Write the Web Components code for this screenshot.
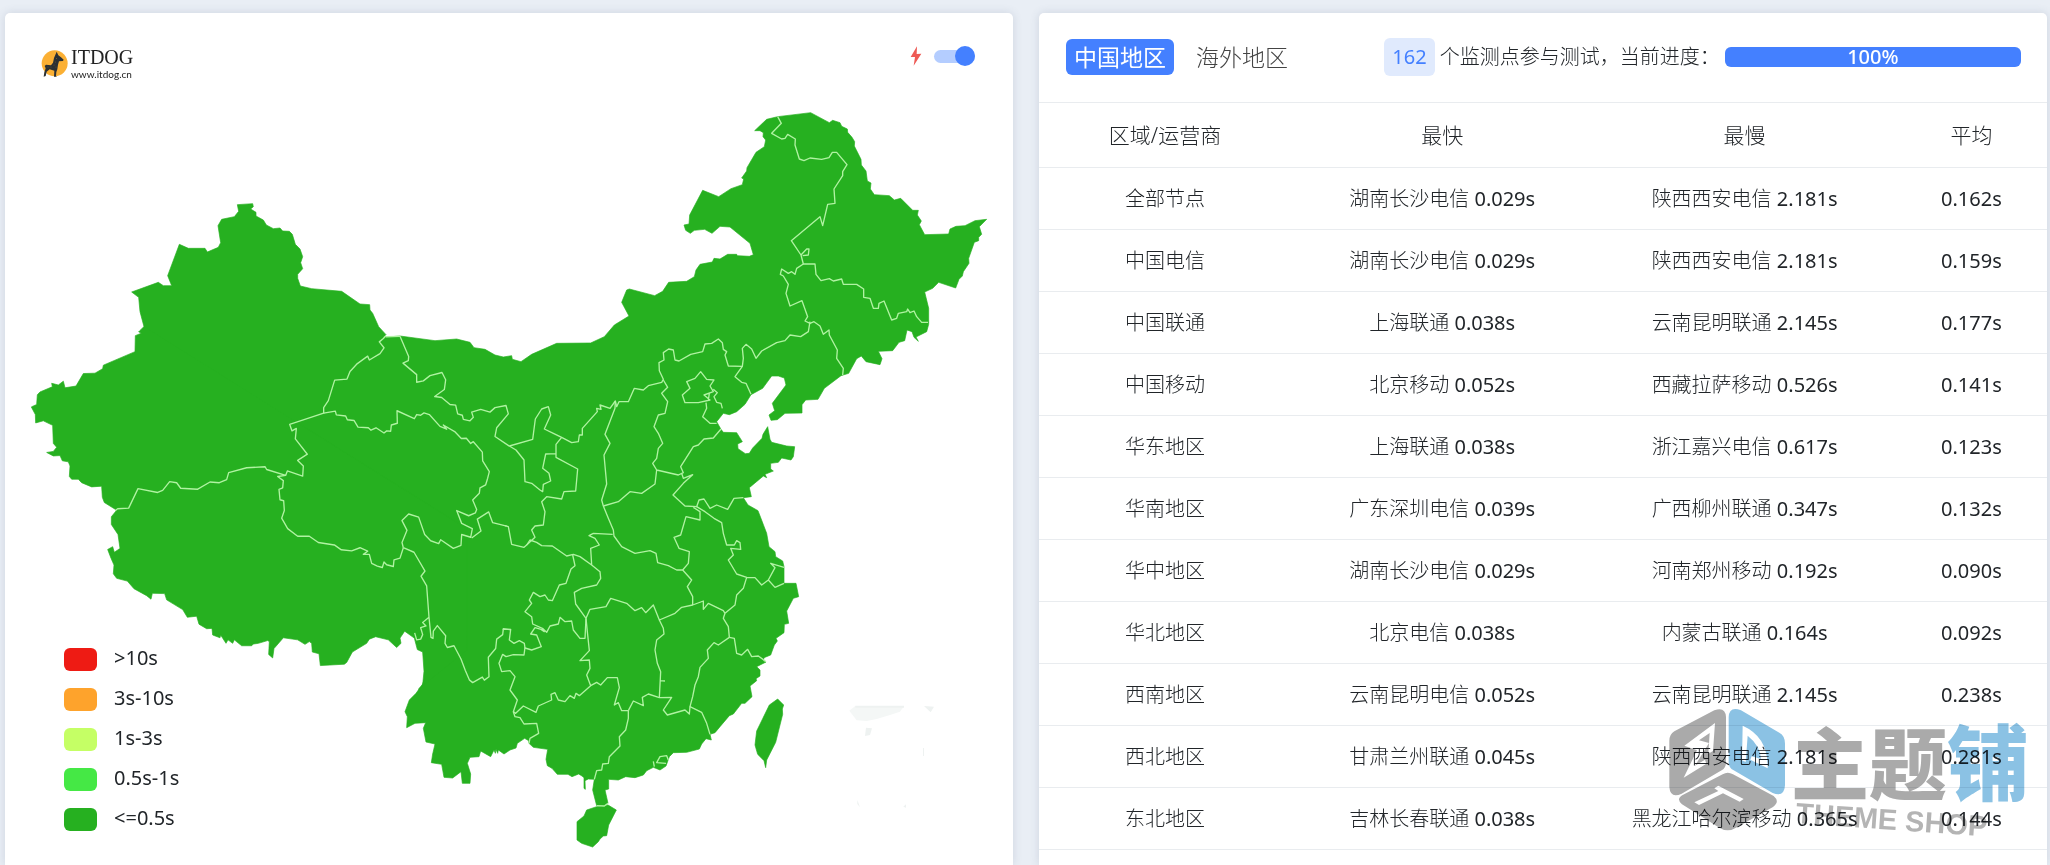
<!DOCTYPE html>
<html lang="zh-CN">
<head>
<meta charset="utf-8">
<title>ITDOG</title>
<style>
  body {
    margin: 0;
    font: 20px/30px "Noto Sans", "Noto Sans CJK SC", sans-serif;
    color: #212529;
    background: #e9eef5;
  }
</style>
</head>
<body>
<speed-page>
  <map-card slot="map"></map-card>
  <result-card slot="result" count="162" progress="100"></result-card>
</speed-page>

<script>
function attach(el, html) {
  const template = document.createElement('template');
  template.innerHTML = html;
  const shadow = el.attachShadow({ mode: 'open' });
  shadow.appendChild(template.content.cloneNode(true));
  return shadow;
}

class SpeedPage extends HTMLElement {
  constructor() {
    super();
    attach(this, `
      <style>
        :host {
          display: grid;
          grid-template-columns: 1fr 1fr;
          gap: 26px;
          min-height: 100vh;
          box-sizing: border-box;
          padding: 13px 3px 0 5px;
        }
        ::slotted(*) {
          background: #fff;
          border-radius: 5px 5px 0 0;
          box-shadow: 0 0 10px rgba(60, 80, 110, .16);
        }
      </style>
      <slot name="map"></slot>
      <slot name="result"></slot>`);
  }
}

class SiteLogo extends HTMLElement {
  constructor() {
    super();
    attach(this, `
      <style>
        :host { display: flex; align-items: center; gap: 3px; height: 34px; }
        svg { width: 27px; height: 27px; }
        .words { display: flex; flex-direction: column; }
        .name { font: 20px/22px "Liberation Serif", serif; color: #222; }
        .url { font: 10px/12px Lato, sans-serif; color: #222; }
      </style>
      <svg viewBox="0 0 81 81" aria-hidden="true">
        <circle cx="41" cy="40" r="39" fill="#fbb034"/>
        <path fill="#2b3033" d="M47 5 L52 16 L60 22 L68 29 L66 33 L54 34 L51 44 L49 58 L46 66 L45 78 L48 80 L39 80 L40 62 L26 58 L17 65 L14 78 L8 80 L10 67 L14 55 L11 48 L15 44 L30 46 L36 38 L39 24Z"/>
        <g fill="#fbb034"><circle cx="46" cy="26" r="1"/><circle cx="44" cy="36" r="1"/><circle cx="39" cy="45" r="1"/><circle cx="45" cy="51" r="1"/><circle cx="30" cy="51" r="1"/><circle cx="21" cy="51" r="1"/></g>
      </svg>
      <span class="words"><span class="name">ITDOG</span><span class="url">www.itdog.cn</span></span>`);
  }
}

class ToggleSwitch extends HTMLElement {
  constructor() {
    super();
    attach(this, `
      <style>
        :host { display: block; }
        label { display: flex; align-items: center; gap: 12px; height: 20px; cursor: pointer; }
        svg { width: 12px; height: 20px; }
        input {
          appearance: none;
          display: flex;
          align-items: center;
          width: 41px;
          height: 13px;
          margin: 0;
          border-radius: 7px;
          background: #d5d8de;
          cursor: pointer;
        }
        input::before {
          content: "";
          width: 20px;
          height: 20px;
          flex: none;
          border-radius: 50%;
          background: #999;
        }
        input:checked { background: #b4cdff; justify-content: flex-end; }
        input:checked::before { background: #4480ff; }
      </style>
      <label>
        <svg viewBox="0 0 36 60" aria-hidden="true"><path fill="#ee5a55" d="M21 1 L2 33 L15 33 L11 59 L34 23 L20 24Z"/></svg>
        <input type="checkbox" checked aria-label="快速测试">
      </label>`);
  }
}

class MapLegend extends HTMLElement {
  constructor() {
    super();
    const levels = [
      ['#ee1b14', '>10s'],
      ['#fea32c', '3s-10s'],
      ['#c5ff65', '1s-3s'],
      ['#45e845', '0.5s-1s'],
      ['#26b020', '<=0.5s'],
    ];
    const shadow = attach(this, `
      <style>
        :host { display: block; }
        ul { display: grid; gap: 10px; margin: 0; padding: 0; list-style: none; }
        li { display: flex; align-items: center; gap: 17px; }
        i { width: 33px; height: 23px; margin-top: 2px; border-radius: 6px; }
      </style>
      <ul></ul>`);
    const list = shadow.querySelector('ul');
    for (const [color, label] of levels) {
      const item = document.createElement('li');
      const swatch = document.createElement('i');
      const text = document.createElement('span');
      swatch.style.background = color;
      text.textContent = label;
      item.append(swatch, text);
      list.append(item);
    }
  }
}

class ChinaMap extends HTMLElement {
  constructor() {
    super();
    attach(this, `
      <style>
        :host { display: block; }
        svg { display: block; width: 100%; height: auto; }
        .land { fill: #26b020; stroke: #26b020; stroke-width: 2; }
        .line { fill: none; stroke: #b0f3a2; stroke-width: 4; stroke-linejoin: round; }
      </style>
      <svg viewBox="15 270 3024 2325" role="img" aria-label="中国地图">
        <!-- mainland, north / east / south -->
        <path class="land" d="M712 614 758 611 760 620 752 627 768 637 768 648 790 660 799 675 820 686 840 684 848 693 868 694 877 703 886 733 900 747 908 770 902 788 908 806 893 823 893 835 901 858 935 866 1025 874 1080 912 1109 914 1110 930 1118 940 1136 980 1158 1004 1150 1012 1200 1008 1305 1022 1370 1017 1410 1027 1422 1043 1455 1048 1485 1065 1510 1071 1535 1067 1537 1078 1563 1085 1595 1063 1670 1030 1772 1029 1813 1010 1843 975 1887 948 1865 907 1880 870 1888 867 1964 887 1988 874 2006 847 2060 844 2083 830 2088 810 2100 793 2137 786 2142 775 2160 777 2183 763 2210 763 2212 767 2248 769 2260 764 2250 730 2190 681 2160 679 2136 700 2114 688 2083 691 2071 700 2057 691 2052 675 2067 672 2069 645 2108 571 2156 590 2193 566 2227 554 2231 537 2225 534 2240 513 2241 503 2268 457 2293 440 2297 420 2289 410 2290 398 2280 392 2264 392 2300 358 2333 350 2432 338 2488 368 2498 361 2520 368 2525 379 2542 387 2543 397 2556 412 2564 425 2563 438 2583 478 2584 495 2598 513 2602 543 2613 549 2611 567 2623 584 2668 587 2683 600 2702 595 2738 631 2755 631 2752 645 2764 663 2758 674 2774 704 2846 702 2850 687 2868 679 2895 677 2925 662 2960 658 2938 680 2945 703 2936 712 2936 722 2923 727 2906 775 2907 790 2890 815 2887 828 2877 838 2867 864 2816 847 2798 865 2774 876 2786 925 2786 973 2780 995 2748 1011 2755 1024 2742 1012 2736 995 2721 990 2714 1022 2697 1027 2678 1052 2635 1054 2646 1076 2640 1094 2598 1085 2584 1068 2570 1076 2546 1120 2523 1127 2473 1165 2454 1198 2417 1200 2406 1214 2406 1239 2355 1240 2332 1259 2313 1261 2307 1245 2324 1232 2317 1210 2358 1155 2353 1134 2335 1128 2315 1128 2288 1165 2253 1184 2235 1213 2210 1235 2188 1244 2170 1240 2150 1265 2163 1288 2170 1297 2210 1298 2227 1325 2213 1332 2214 1346 2236 1361 2248 1360 2258 1344 2286 1315 2289 1303 2303 1280 2310 1318 2315 1327 2360 1338 2384 1340 2380 1370 2373 1380 2345 1374 2335 1387 2312 1390 2312 1407 2320 1413 2295 1423 2300 1433 2290 1428 2248 1463 2254 1490 2230 1493 2244 1515 2274 1532 2300 1600 2307 1640 2325 1655 2327 1670 2348 1683 2352 1700 2352 1750 2388 1750 2396 1790 2380 1795 2360 1833 2366 1870 2353 1873 2352 1898 2328 1915 2332 1923 2323 1935 2312 1965 2292 1973 2290 1983 2298 1986 2270 2000 2280 2010 2280 2028 2268 2036 2270 2042 2250 2058 2256 2090 2235 2110 2225 2110 2200 2142 2188 2147 2160 2180 2145 2198 2130 2203 2134 2220 2118 2216 2105 2232 2098 2247 2060 2257 2020 2258 2008 2270 1998 2298 1980 2310 1960 2302 1940 2312 1930 2325 1905 2333 1877 2330 1855 2340 1826 2338 1826 2367 1815 2370 1824 2410 1813 2418 1790 2417 1778 2370 1783 2338 1765 2337 1755 2342 1756 2368 1752 2365 1752 2333 1746 2328 1736 2322 1716 2330 1704 2323 1672 2323 1656 2305 1642 2297 1638 2278 1643 2248 1600 2242 1587 2230 1586 2222 1574 2215 1552 2230 1548 2244 1530 2250 1512 2262 1495 2250 1493 2260 1488 2248 1486 2260 1482 2250 1472 2270 1442 2253 1437 2270 1410 2272 1402 2290 1412 2322 1410 2350 1387 2350 1383 2315 1358 2334 1332 2332 1325 2293 1294 2288 1298 2262 1305 2232 1278 2226 1270 2185 1277 2168 1245 2170 1220 2183 1222 2150 1215 2135 1228 2100 1248 2080 1268 2052 1340 1840 1150 1750 1000 1500 432 980 420 935 416 892 395 876 475 847 490 857 515 857 503 827 538 733 565 745 615 745 622 756 655 742 662 728 654 677 665 658 703 650 716 634Z"/>
        <!-- Taiwan, Hainan -->
        <path class="land" d="M2333 2097 2351 2115 2347 2127 2348 2143 2327 2227 2300 2280 2297 2303 2292 2282 2273 2263 2265 2235 2270 2193 2308 2115Z"/>
        <path class="land" d="M1824 2415 1849 2430 1826 2475 1820 2507 1810 2508 1800 2517 1795 2525 1778 2541 1745 2530 1731 2520 1731 2465 1752 2448 1760 2430 1790 2420Z"/>
        <!-- west -->
        <g transform="translate(0 960) scale(1 1.043)">
          <path class="land" d="M432 19 420 30 416 34 424 38 406 45 405 91 310 130 308 140 285 153 250 154 228 190 195 195 190 176 175 187 155 182 157 192 120 207 112 215 110 243 94 250 106 272 107 296 130 290 158 303 160 355 170 366 160 378 140 381 160 391 180 390 187 405 205 408 210 420 208 450 215 458 235 458 245 468 275 480 305 478 307 510 313 525 350 547 334 566 334 588 354 617 360 657 343 668 338 652 323 660 333 685 342 705 340 730 350 743 382 751 402 773 440 793 453 803 457 786 494 787 500 805 548 833 562 855 590 852 597 875 620 888 636 887 638 906 660 914 662 906 678 930 684 920 698 930 703 920 725 937 755 937 760 932 775 930 803 922 808 925 806 962 818 972 822 945 850 914 893 920 915 933 928 925 935 930 937 955 957 960 961 994 1033 990 1040 985 1057 955 1100 930 1108 918 1127 911 1165 920 1190 942 1203 930 1200 915 1214 895 1243 915 1252 948 1268 955 1272 1010 1268 1050 1255 1062 1400 950 1400 600 900 300Z"/>
          <path class="line" d="M1158 45 1150 53 1138 63 1152 80 1140 97 1108 115 1103 104 1070 127 1050 148 1041 170 1004 173 985 232 971 252 971 268 869 300 876 319 889 312 886 342 922 386 893 404 910 420 908 449 862 434 857 447 800 430 795 422 740 425 686 439 680 459 658 468 630 466 592 487 542 484 530 468 509 465 488 490 473 496 414 485 386 541 353 543 346 548M1158 48 1200 47"/>
          <path class="line" d="M1200 47 1226 105 1225 117 1209 124 1250 157 1250 179 1270 175 1290 160 1326 151 1337 172 1333 200 1304 220 1325 223 1350 243 1367 245 1373 270 1387 274 1390 286 1410 290 1420 280 1415 265 1442 257 1470 265 1485 252 1518 246 1525 270 1490 310 1485 335 1528 363"/>
          <path class="line" d="M971 268 1006 262 1009 273 1037 276 1042 287 1062 289 1074 308 1105 310 1113 317 1128 310 1152 325 1160 319 1172 320 1174 302 1192 297 1191 261 1243 284 1250 272 1262 274 1272 267 1288 272 1320 306 1340 314 1330 302 1364 321 1384 341 1399 340 1412 355 1420 350 1447 380 1448 405 1468 436 1463 455 1457 474 1440 483 1438 498 1418 518 1430 545 1426 555 1406 563 1370 548 1385 585 1400 592 1417 600 1412 625 1385 617 1383 648 1360 657 1322 632 1316 643 1292 635 1274 617 1256 567 1226 558 1206 577 1221 605 1206 640 1210 655"/>
          <path class="line" d="M857 447 833 450 850 462 848 483 837 487 840 517 851 520 853 548 845 570 863 600 893 622 928 622 955 640 1003 647 1024 661 1055 664 1080 655 1103 665 1090 674 1108 674 1115 700 1132 708 1147 712 1152 696 1160 704 1180 709 1182 690 1200 685 1210 655"/>
          <path class="line" d="M1210 655 1242 668 1275 722 1263 737 1280 765 1287 855 1293 913 1299 916 1300 895 1312 879 1337 908 1335 930 1342 942 1362 937 1383 975 1396 1008 1408 1035 1418 1043 1447 1027 1453 1036 1467 1026 1465 970 1487 945 1490 918 1508 905 1510 888 1533 891M1287 855 1268 870 1278 880 1262 885 1268 905 1262 918 1250 920 1244 900"/>
          <path class="line" d="M1415 627 1443 607 1432 573 1466 552 1478 583 1520 593"/>
        </g>
        <!-- centre -->
        <g transform="translate(1140 900)">
          <path class="line" d="M388 438 458 418 466 357 485 327 505 320 512 345 493 387 520 400 545 412 575 428 595 425 598 405 607 405 607 385 652 335 650 325 663 328 660 315 690 325 706 303 710 320 717 305 745 305 763 265 790 270 805 257 845 247 850 238 838 212 837 188 852 180 850 158 866 147 880 150 885 180 897 183 932 163 968 155 975 132 995 130 1015 117 1027 128 1030 148 1040 155 1035 165 1045 198 1087 199 1090 175 1087 145 1098 133 1115 147 1128 175 1145 153 1190 128 1215 122 1230 105 1262 110 1285 95 1290 65"/>
          <path class="line" d="M388 438 408 450 432 480 435 545 455 550 480 570 488 575 490 553 512 543 507 520 488 505 497 462 528 461 528 433 545 412M528 461 528 472 593 507 587 573 552 575 545 597 500 590 485 605 495 635 490 675 465 678 455 690 465 712 440 735 432 742 395 733 385 680 375 677"/>
          <path class="line" d="M440 735 450 720 470 727 485 737 517 738 560 768 580 763 600 770 635 795 660 815 662 835 650 855 605 865 583 877 587 912 618 955M635 795 632 745 658 735 645 715 627 707 640 700 698 703"/>
          <path class="line" d="M706 303 705 325 675 403 690 430 672 465 680 552 665 600 670 618 685 655 700 690 702 708 725 740 765 760 810 752 828 760 833 788 865 797 890 810 908 810 935 840 922 860 938 890 938 915"/>
          <path class="line" d="M670 618 715 605 750 575 785 580 825 552 830 510 818 490 830 475 835 445 848 430 835 400 822 380 835 345 855 340 863 305 845 280 863 262 850 240M830 510 895 525 910 518 902 500 940 440 955 435 972 417 1000 414 1023 387M905 520 910 535 938 524 910 550 879 585 915 618 950 620 957 600 972 597 990 625 1010 615 1043 628 1062 595 1090 593"/>
          <path class="line" d="M940 622 960 635 960 660 918 650 902 705 882 712 897 745 928 755 925 790 908 810M950 620 975 635 1002 655 1025 668 1030 700 1040 735 1063 735 1070 722 1080 728 1082 748 1052 745 1060 765 1045 780 1070 822 1100 832 1090 865 1070 885 1065 915 1035 940M1100 832 1125 833 1145 855 1165 840 1185 862 1212 850M1165 840 1185 803 1172 790 1212 802"/>
          <path class="line" d="M618 955 630 928 678 920 692 895 740 910 765 932 785 923 797 938 820 915 838 960 885 940 905 922 938 915 970 903 970 928 985 910 1030 932 1035 940"/>
          <path class="line" d="M962 215 945 235 920 245 930 265 907 285 915 308 955 308 990 300 972 285 1000 275 990 258 1002 240 980 238ZM1000 268 1012 278 1002 290 1010 307 1023 310 1027 325M988 280 985 300M978 308 980 325 968 350 990 370 1010 370M1087 199 1065 230 1085 247 1098 250 1113 283"/>
          <path class="line" d="M578 765 585 797 573 807 558 850 538 855 517 902 505 900 495 885 480 890 460 877 448 900 455 910 435 935 455 950 458 972 487 985 500 997 510 978 535 972 540 952 555 965 575 963 580 990 600 1015 615 1015 618 955"/>
        </g>
        <!-- south -->
        <g transform="translate(1140 1680)">
          <path class="line" d="M618 175 622 215 628 272 600 302 628 300 630 325 620 345 632 377M368 208 392 208 388 240 402 250 418 242 433 250 435 264 455 270 484 260 470 225 452 222 465 203 483 208 493 215 487 205"/>
          <path class="line" d="M435 262 432 285 400 284 378 290 368 283 357 310 365 335 390 332 405 350 390 390 412 420 400 455 407 460 430 438 468 457 475 438 515 420 513 403 525 398 535 420 555 425 570 407 583 415 588 400 598 407 632 377 650 367 662 375 682 353 712 353 718 383 703 435 715 428 725 452 745 452"/>
          <path class="line" d="M400 455 405 470 420 473 432 492 470 490 476 520 450 535 447 550M745 452 760 423 790 437 787 412 805 402 838 413 875 412 850 450 862 465 915 450 928 462 930 440M745 452 745 475 737 510 718 530 720 558 688 590 685 610 668 612 665 630 650 632 643 658"/>
          <path class="line" d="M838 180 850 205 852 222 830 240 825 270 832 310 842 335 838 413M842 362 855 363M1035 160 1030 175 1045 200 1048 232 1015 255 1002 248 982 270 985 295 960 322 955 350 945 375 938 410 930 440 965 457 980 490 990 523"/>
          <path class="line" d="M1048 232 1063 235 1070 280 1085 285 1103 268 1115 290 1135 288 1158 305M820 604 823 620M865 600 860 587 840 590 830 608 858 610M650 737 673 738 684 730"/>
        </g>
        <!-- north-east -->
        <g transform="translate(1680 270)">
          <path class="line" d="M653 80 664 100 635 130 665 147 675 145 683 133 706 147 705 165 718 207 732 212 750 204 785 208 807 203 817 187 830 187 861 224 848 245 848 257 822 297 825 340 803 343 788 407 780 380 694 452 723 495 730 522 765 522 768 553 783 572 808 566 820 573 845 567 850 583 890 583 911 597 911 622 930 625 940 655 955 655 957 640 972 633 995 690 1010 685 1015 670 1040 665 1043 657 1050 668 1062 663 1070 680 1085 697 1104 697"/>
          <path class="line" d="M723 495 740 477 747 477 745 495 728 497M730 522 710 535 705 553 695 545 685 550 665 537 661 553 670 558 685 583 678 610 690 648 726 632 743 680 735 693 750 700 762 695 780 708 790 733 807 720 808 735 832 780 830 805 850 835 848 855"/>
        </g>
        <!-- sea inset, barely visible -->
        <g transform="translate(2490 2070)" fill="#eef2f1">
          <path fill="#f4f7f6" d="M58 62 76 48 222 48 210 65 180 75 140 87 110 93 80 91Z"/>
          <path d="M76 47H222V53H76ZM282 48 312 50 302 67ZM108 113 126 115 120 135 105 138ZM279 174H282V198H279ZM82 330 90 352 82 342ZM220 350 228 343 228 353Z"/>
        </g>
      </svg>`);
  }
}

class MapCard extends HTMLElement {
  constructor() {
    super();
    attach(this, `
      <style>
        :host { display: block; }
        header {
          display: flex;
          justify-content: space-between;
          align-items: flex-start;
          padding: 33px 38px 10px 36px;
        }
        .stage { display: grid; }
        .stage > * { grid-area: 1 / 1; }
        map-legend { align-self: end; justify-self: start; padding: 0 0 32px 59px; }
      </style>
      <header>
        <site-logo></site-logo>
        <toggle-switch></toggle-switch>
      </header>
      <div class="stage">
        <china-map></china-map>
        <map-legend></map-legend>
      </div>`);
  }
}

class ResultTable extends HTMLElement {
  constructor() {
    super();
    const rows = [
      ['全部节点', '湖南长沙电信 0.029s', '陕西西安电信 2.181s', '0.162s'],
      ['中国电信', '湖南长沙电信 0.029s', '陕西西安电信 2.181s', '0.159s'],
      ['中国联通', '上海联通 0.038s', '云南昆明联通 2.145s', '0.177s'],
      ['中国移动', '北京移动 0.052s', '西藏拉萨移动 0.526s', '0.141s'],
      ['华东地区', '上海联通 0.038s', '浙江嘉兴电信 0.617s', '0.123s'],
      ['华南地区', '广东深圳电信 0.039s', '广西柳州联通 0.347s', '0.132s'],
      ['华中地区', '湖南长沙电信 0.029s', '河南郑州移动 0.192s', '0.090s'],
      ['华北地区', '北京电信 0.038s', '内蒙古联通 0.164s', '0.092s'],
      ['西南地区', '云南昆明电信 0.052s', '云南昆明联通 2.145s', '0.238s'],
      ['西北地区', '甘肃兰州联通 0.045s', '陕西西安电信 2.181s', '0.281s'],
      ['东北地区', '吉林长春联通 0.038s', '黑龙江哈尔滨移动 0.365s', '0.144s'],
    ];
    const shadow = attach(this, `
      <style>
        :host { display: block; }
        table { width: 100%; table-layout: fixed; border-collapse: collapse; text-align: center; }
        th, td { padding: 0; border-bottom: 1px solid #e9ecef; white-space: nowrap; font-weight: 300; }
        th { height: 64px; font-size: 21px; }
        td { height: 61px; }
        .area { width: 25%; }
        .node { width: 30%; }
        .avg { width: 15%; }
        .time { font-weight: 400; }
      </style>
      <table>
        <thead>
          <tr><th class="area">区域/运营商</th><th class="node">最快</th><th class="node">最慢</th><th class="avg">平均</th></tr>
        </thead>
        <tbody></tbody>
      </table>`);
    const body = shadow.querySelector('tbody');
    for (const row of rows) {
      const tr = body.insertRow();
      for (const cell of row) {
        tr.insertCell().innerHTML = cell.replace(/[\d.]+s$/, '<span class="time">$&</span>');
      }
    }
  }
}

class ShopMark extends HTMLElement {
  constructor() {
    super();
    attach(this, `
      <style>
        :host { display: block; pointer-events: none; mix-blend-mode: multiply; }
        svg { display: block; width: 357px; height: 133px; overflow: visible; }
        text { fill: #aaa; }
        .cn { font: 900 234px "Noto Sans CJK SC", sans-serif; }
        .en { font: bold 87px "Liberation Sans", sans-serif; fill: #b4b4b4; }
        .blue { fill: #8bc2e4; font-size: 246px; }
      </style>
      <svg viewBox="80 50 1071 399">
        <g transform="translate(75 30)" fill="#aaa">
          <path fill-rule="evenodd" d="M15 122 Q15 102 30 93 L150 30 Q183 18 185 50 L185 185 Q185 203 172 210 L52 280 Q18 296 15 260ZM152 68 60 136 98 150 58 232 126 190 122 178 92 196 134 128 104 120 136 98 132 160 146 152Z"/>
          <path fill="#8bc2e4" fill-rule="evenodd" d="M193 50 Q195 16 230 30 L345 97 Q362 106 362 130 L362 255 Q360 292 325 278 L208 210 Q193 203 193 185ZM235 76 233 180 244 185 250 106 Q288 136 290 176 L262 168 258 178 310 204 Q312 110 235 76Z"/>
          <path fill-rule="evenodd" d="M175 222 Q190 212 206 222 L328 287 Q348 304 326 320 L215 382 Q190 398 165 382 L53 312 Q34 296 55 284ZM162 256 150 264 162 272 90 306 104 314 176 279 226 304 238 296Z"/>
        </g>
        <text class="cn" x="455" y="312">主题<tspan class="blue">铺</tspan></text>
        <text class="en" x="468" y="398" transform="rotate(4 468 398)">THEME SHOP</text>
      </svg>`);
  }
}

class ResultCard extends HTMLElement {
  constructor() {
    super();
    this.shadow = attach(this, `
      <style>
        :host { display: block; position: relative; }
        header {
          display: grid;
          grid-template-columns: 1fr 2fr;
          align-items: center;
          padding: 25px 26px 26px 27px;
          border-bottom: 1px solid #e9ecef;
          white-space: nowrap;
        }
        nav { display: flex; gap: 14px; }
        button {
          padding: 0 8px;
          border: 0;
          border-radius: 6px;
          background: none;
          font: 300 23px/36px "Noto Sans", "Noto Sans CJK SC", sans-serif;
          color: #444;
          cursor: pointer;
        }
        button.active { background: #4480ff; color: #fff; font-weight: 400; }
        .status { display: flex; align-items: center; gap: 5px; font-weight: 300; }
        .count {
          padding: 0 8px;
          border-radius: 6px;
          background: #e0eafd;
          color: #4480ff;
          font-weight: 400;
          line-height: 38px;
        }
        .progress { flex: 1; border-radius: 6px; background: #e9ecef; }
        .bar {
          display: flex;
          align-items: center;
          justify-content: center;
          height: 20px;
          border-radius: 6px;
          background: #4480ff;
          color: #fff;
          font-weight: 500;
        }
        shop-mark { position: absolute; right: 24px; top: 694px; }
      </style>
      <header>
        <nav>
          <button class="active" type="button">中国地区</button>
          <button type="button">海外地区</button>
        </nav>
        <div class="status">
          <span class="count"></span>
          <span>个监测点参与测试，当前进度：</span>
          <div class="progress" role="progressbar" aria-valuemin="0" aria-valuemax="100"><div class="bar"></div></div>
        </div>
      </header>
      <result-table></result-table>
      <shop-mark></shop-mark>`);
  }

  connectedCallback() {
    const progress = this.getAttribute('progress');
    const bar = this.shadow.querySelector('.bar');
    this.shadow.querySelector('.count').textContent = this.getAttribute('count');
    this.shadow.querySelector('.progress').setAttribute('aria-valuenow', progress);
    bar.style.width = progress + '%';
    bar.textContent = progress + '%';
  }
}

customElements.define('site-logo', SiteLogo);
customElements.define('toggle-switch', ToggleSwitch);
customElements.define('map-legend', MapLegend);
customElements.define('china-map', ChinaMap);
customElements.define('map-card', MapCard);
customElements.define('result-table', ResultTable);
customElements.define('shop-mark', ShopMark);
customElements.define('result-card', ResultCard);
customElements.define('speed-page', SpeedPage);
</script>
</body>
</html>
